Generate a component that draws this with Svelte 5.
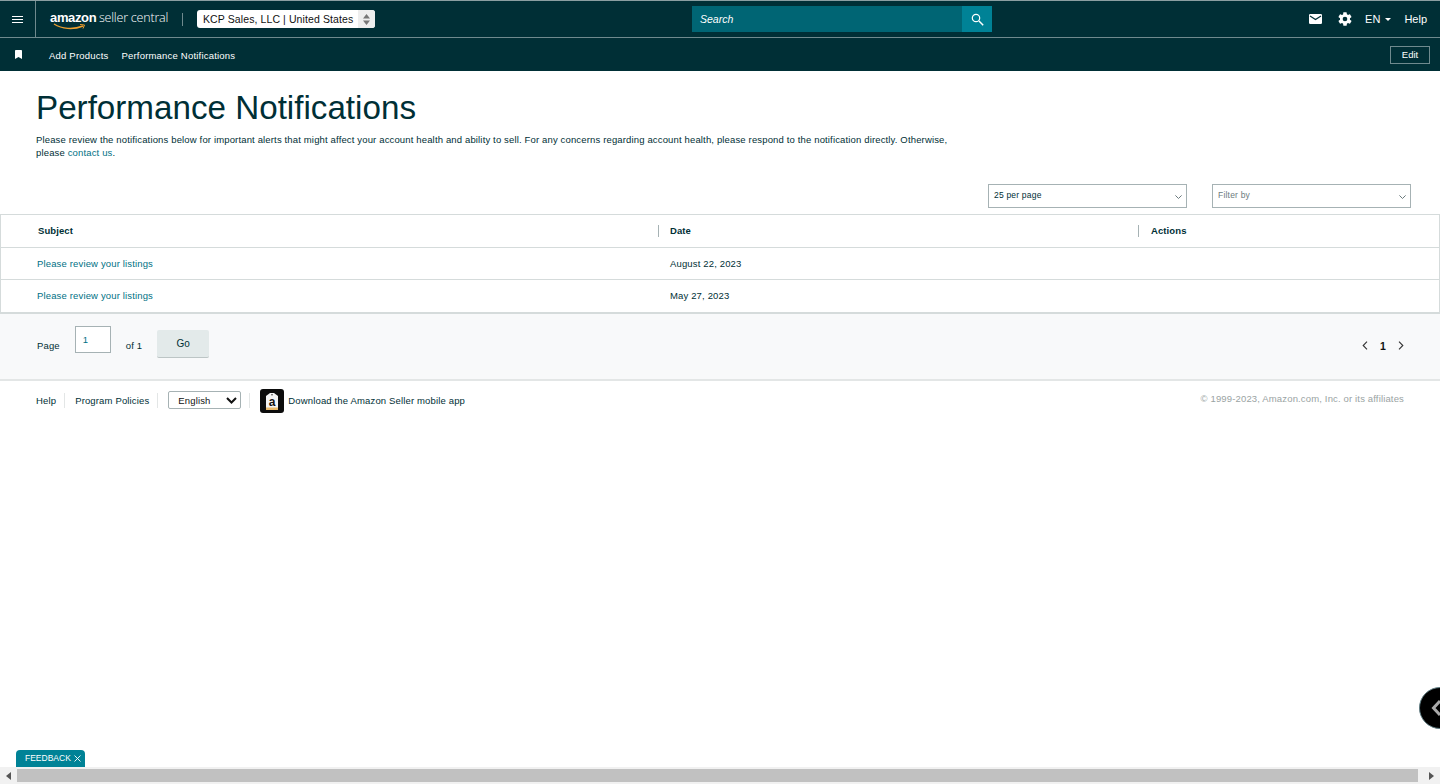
<script>
	const rows = [
		{ subject: 'Please review your listings', date: 'August 22, 2023' },
		{ subject: 'Please review your listings', date: 'May 27, 2023' }
	];
</script>

<div class="page">
	<!-- top nav -->
	<header class="nav">
		<div class="nav-top">
			<button class="burger" aria-label="Menu">
				<svg width="11" height="7" viewBox="0 0 11 7"><path d="M0 .5h11M0 3.500h11M0 6.500h11" stroke="#fff" stroke-width="1" /></svg>
			</button>
			<div class="logo">
				<span class="logo-amazon">amazon</span>
				<span class="logo-central">seller central</span>
				<svg class="smile" width="34" height="7" viewBox="0 0 34 7"><path d="M1 1c8 5 19 6 29 2" fill="none" stroke="#f0a030" stroke-width="1.4" /><path d="M27 1.500l4.500 .5-1.500 3.500" fill="none" stroke="#f0a030" stroke-width="1" /></svg>
			</div>
			<span class="logo-sep"></span>
			<div class="account">
				<span>KCP Sales, LLC | United States</span>
				<span class="spinner">
					<svg width="9" height="13" viewBox="0 0 9 13"><path d="M4.500 1l3.500 4.500h-7zM4.500 12l3.500-4.500h-7z" fill="#777" /></svg>
				</span>
			</div>
			<div class="search">
				<span class="search-text">Search</span>
				<span class="search-btn">
					<svg width="13" height="13" viewBox="0 0 13 13"><circle cx="5" cy="5" r="3.700" fill="none" stroke="#fff" stroke-width="1.200" /><path d="M8 8l4.200 4.200" stroke="#fff" stroke-width="1.500" /></svg>
				</span>
			</div>
			<div class="nav-right">
				<svg width="13" height="10" viewBox="0 0 13 10"><rect width="13" height="10" rx="1.200" fill="#fff" /><path d="M1 2l5.500 3.500L12 2" fill="none" stroke="#002f36" stroke-width="1.200" /></svg>
				<svg class="gear" width="16" height="16" viewBox="0 0 24 24"><path fill="#fff" d="M19.400 13c.04-.33.06-.66.06-1s-.02-.67-.06-1l2.100-1.650c.19-.15.24-.42.12-.64l-2-3.460c-.12-.22-.39-.3-.61-.22l-2.490 1c-.52-.4-1.080-.73-1.690-.98l-.38-2.650A.49.49 0 0 0 14 2h-4c-.25 0-.46.18-.49.42l-.38 2.650c-.61.25-1.170.59-1.690.98l-2.490-1c-.23-.09-.49 0-.61.22l-2 3.460c-.13.22-.07.49.12.64L4.570 11c-.04.33-.07.67-.07 1s.03.67.07 1l-2.110 1.650c-.19.15-.24.42-.12.64l2 3.460c.12.22.39.3.61.22l2.490-1c.52.4 1.080.73 1.690.98l.38 2.650c.03.24.24.42.49.42h4c.25 0 .46-.18.49-.42l.38-2.650c.61-.25 1.170-.59 1.690-.98l2.490 1c.23.09.49 0 .61-.22l2-3.460c.12-.22.07-.49-.12-.64L19.400 13zM12 15.500a3.500 3.500 0 1 1 0-7 3.500 3.500 0 0 1 0 7z" /></svg>
				<span class="lang">EN<i class="caret"></i></span>
				<span class="help">Help</span>
			</div>
		</div>
		<div class="nav-bottom">
			<svg class="bookmark" width="7" height="9" viewBox="0 0 7 9"><path d="M0 .8C0 .3.3 0 .8 0h5.400c.5 0 .8.3.8.8V9L3.500 7 0 9z" fill="#fff" /></svg>
			<a class="shortcut" href="#/">Add Products</a>
			<a class="shortcut" href="#/">Performance Notifications</a>
			<button class="edit">Edit</button>
		</div>
	</header>

	<main>
		<section class="intro">
			<h1>Performance Notifications</h1>
			<p>Please review the notifications below for important alerts that might affect your account health and ability to sell. For any concerns regarding account health, please respond to the notification directly. Otherwise, <span class="nowrap">please <a href="#/">contact us</a>.</span></p>
		</section>

		<div class="filters">
			<div class="select per-page">25 per page<svg width="7" height="4" viewBox="0 0 7 4"><path d="M.4.4l3.100 3.100L6.600.4" fill="none" stroke="#6b7a7d" /></svg></div>
			<div class="select filter-by">Filter by<svg width="7" height="4" viewBox="0 0 7 4"><path d="M.4.4l3.100 3.100L6.600.4" fill="none" stroke="#6b7a7d" /></svg></div>
		</div>

		<div class="table">
			<div class="row head">
				<div class="cell">Subject</div>
				<div class="cell">Date</div>
				<div class="cell">Actions</div>
			</div>
			{#each rows as row}
				<div class="row">
					<div class="cell"><a href="#/">{row.subject}</a></div>
					<div class="cell">{row.date}</div>
					<div class="cell"></div>
				</div>
			{/each}
		</div>

		<div class="pager">
			<span>Page</span>
			<span class="page-input">1</span>
			<span>of 1</span>
			<button class="go">Go</button>
			<div class="pager-right">
				<svg width="6" height="9" viewBox="0 0 6 9"><path d="M5 .7L1.200 4.500 5 8.300" fill="none" stroke="#333" stroke-width="1.100" /></svg>
				<b>1</b>
				<svg width="6" height="9" viewBox="0 0 6 9"><path d="M1 .7l3.800 3.800L1 8.300" fill="none" stroke="#333" stroke-width="1.100" /></svg>
			</div>
		</div>

		<footer>
			<a href="#/">Help</a>
			<i class="sep"></i>
			<a href="#/">Program Policies</a>
			<i class="sep"></i>
			<span class="lang-select">English
				<svg width="11" height="7" viewBox="0 0 11 7"><path d="M1 1l4.500 4.500L10 1" fill="none" stroke="#111" stroke-width="2" /></svg>
			</span>
			<i class="sep"></i>
			<span class="app-icon">
				<svg width="16" height="19" viewBox="0 0 16 19"><path d="M2 4l4-3h4l4 3v14H2z" fill="#f4f4f4" /><circle cx="8" cy="2.800" r=".7" fill="#111" /><path d="M2 15.500h12V18H2z" fill="#e8b96a" /></svg>
				<b>a</b>
			</span>
			<a href="#/">Download the Amazon Seller mobile app</a>
			<span class="copy">© 1999-2023, Amazon.com, Inc. or its affiliates</span>
		</footer>
	</main>

	<!-- floating bits -->
	<div class="feedback">FEEDBACK
		<svg width="7" height="7" viewBox="0 0 7 7"><path d="M.5.5l6 6M6.500.5l-6 6" stroke="#fff" stroke-width=".9" /></svg>
	</div>
	<div class="chat">
		<svg width="12" height="18" viewBox="0 0 12 18"><path d="M9 2L2.500 9 9 16" fill="none" stroke="#aaa" stroke-width="3" /></svg>
	</div>
	<div class="scrollbar">
		<svg width="5" height="8" viewBox="0 0 5 8"><path d="M5 0v8L0 4z" fill="#555" /></svg>
		<span class="thumb"></span>
		<svg width="5" height="8" viewBox="0 0 5 8"><path d="M0 0v8l5-4z" fill="#555" /></svg>
	</div>
</div>

<style>
	:global(body) {
		margin: 0;
		background: #fff;
		overflow: hidden;
	}

	.page {
		height: 784px;
		font-family: 'Liberation Sans', Arial, sans-serif;
		font-size: 10px;
		color: #002f36;
		overflow: hidden;
	}

	a {
		color: inherit;
		text-decoration: none;
	}

	button {
		font-family: inherit;
		cursor: pointer;
	}

	/* nav */
	.nav {
		background: #002f36;
		color: #fff;
		border-top: 1px solid #8b9fa2;
	}

	.nav-top {
		height: 36px;
		display: flex;
		align-items: center;
		border-bottom: 1px solid #6f8a8e;
		position: relative;
	}

	.burger {
		width: 36px;
		height: 36px;
		background: none;
		border: 0;
		border-right: 1px solid #6f8a8e;
		padding: 0;
		display: flex;
		align-items: center;
		justify-content: center;
	}

	.logo {
		margin-left: 14px;
		width: 120px;
		position: relative;
		white-space: nowrap;
		font-size: 13px;
		line-height: 16px;
		margin-top: -3px;
	}

	.logo-amazon {
		font-weight: 700;
		font-size: 13px;
		letter-spacing: -0.35px;
	}

	.logo-central {
		font-family: 'Open Sans', sans-serif;
		font-weight: 300;
		font-size: 12.500px;
		letter-spacing: -0.2px;
		margin-left: -1px;
	}

	.smile {
		position: absolute;
		left: 3px;
		top: 13px;
	}

	.logo-sep {
		width: 1px;
		height: 13px;
		background: #6f8a8e;
		margin-left: 12px;
	}

	.account {
		margin-left: 14px;
		width: 178px;
		height: 18px;
		background: #fff;
		border-radius: 3px;
		color: #111;
		font-size: 10.500px;
		letter-spacing: 0.1px;
		display: flex;
		align-items: center;
		justify-content: space-between;
		padding-left: 6px;
		box-sizing: border-box;
		white-space: nowrap;
	}

	.spinner {
		width: 17px;
		height: 18px;
		background: #eee;
		border-radius: 0 3px 3px 0;
		display: flex;
		align-items: center;
		justify-content: center;
	}

	.search {
		position: absolute;
		left: 692px;
		top: 5px;
		width: 300px;
		height: 26px;
		background: #006574;
		display: flex;
		justify-content: space-between;
		align-items: center;
	}

	.search-text {
		font-style: italic;
		font-size: 10.500px;
		margin-left: 8px;
	}

	.search-btn {
		width: 30px;
		height: 26px;
		background: #008296;
		display: flex;
		align-items: center;
		justify-content: center;
	}

	.nav-right {
		margin-left: auto;
		display: flex;
		align-items: center;
		margin-right: 13px;
		font-size: 11px;
	}

	.gear {
		margin-left: 15px;
	}

	.lang {
		margin-left: 12px;
		display: flex;
		align-items: center;
	}

	.caret {
		width: 0;
		height: 0;
		margin-left: 5px;
		border: 3px solid transparent;
		border-top: 3px solid #fff;
		border-bottom: 0;
	}

	.help {
		margin-left: 13px;
	}

	.nav-bottom {
		height: 33px;
		display: flex;
		align-items: center;
		padding: 0 10px 0 15px;
	}

	.shortcut {
		font-size: 9.500px;
		letter-spacing: 0.2px;
		margin-top: 2px;
		margin-right: 13px;
	}

	.bookmark + .shortcut {
		margin-left: 27px;
	}

	.edit {
		margin-left: auto;
		width: 40px;
		height: 18px;
		background: transparent;
		border: 1px solid #6f8a8e;
		color: #fff;
		font-size: 9.500px;
		padding: 0;
	}

	/* content */
	.intro {
		padding: 17px 36px 0;
	}

	h1 {
		margin: 0;
		font-size: 33.200px;
		font-weight: 400;
		line-height: 40px;
	}

	p {
		margin: 5px 0 0;
		width: 920px;
		font-size: 9.500px;
		line-height: 13px;
		letter-spacing: 0.15px;
	}

	.nowrap {
		white-space: nowrap;
	}

	p a,
	.row a {
		color: #007185;
	}

	.filters {
		display: flex;
		justify-content: flex-end;
		gap: 25px;
		padding: 25px 29px 0 0;
	}

	.select {
		height: 24px;
		box-sizing: border-box;
		border: 1px solid #a6b2b4;
		display: flex;
		align-items: center;
		justify-content: space-between;
		padding: 0 4px 2px 5px;
		font-size: 8.500px;
		letter-spacing: 0.2px;
		width: 199px;
	}

	.select svg {
		margin-top: 3px;
	}

	.filter-by {
		color: #6b7a7d;
	}

	.table {
		margin-top: 6px;
		border: 1px solid #d5dbdb;
		border-bottom: 2px solid #d5dbdb;
		font-size: 9.500px;
		letter-spacing: 0.15px;
	}

	.row {
		display: grid;
		grid-template-columns: 658px 480px 1fr;
		height: 32px;
		box-sizing: border-box;
		align-items: center;
		border-top: 1px solid #d5dbdb;
	}

	.row:last-child {
		height: 33px;
		padding-bottom: 1px;
	}

	.row.head {
		grid-template-columns: 657px 480px 1fr;
		border-top: 0;
		font-weight: 700;
		letter-spacing: 0.1px;
	}

	.cell {
		padding-left: 11px;
	}

	.cell:first-child {
		padding-left: 36px;
	}

	.head .cell {
		line-height: 12px;
	}

	.head .cell:first-child {
		padding-left: 37px;
	}

	.head .cell + .cell {
		border-left: 1px solid #a6b2b4;
	}

	.head .cell:last-child {
		padding-left: 12px;
	}

	.pager {
		height: 67px;
		box-sizing: border-box;
		background: #f8f9fa;
		border-bottom: 2px solid #e3e6e6;
		display: flex;
		align-items: center;
		padding: 0 36px 2px 37px;
		font-size: 9.500px;
		letter-spacing: 0.15px;
	}

	.page-input {
		width: 36px;
		height: 27px;
		box-sizing: border-box;
		align-self: flex-start;
		margin: 12px 15px 0 15px;
		border: 1px solid #a6b2b4;
		background: #fff;
		padding: 7px 7px;
		color: #007185;
	}

	.go {
		align-self: flex-start;
		margin: 16px 0 0 15px;
		width: 52px;
		height: 28px;
		background: #e3eaea;
		border: 0;
		border-bottom: 1px solid #bcc5c5;
		border-radius: 2px;
		color: #002f36;
		font-size: 10px;
	}

	.pager-right {
		margin-left: auto;
		display: flex;
		align-items: center;
		gap: 12px;
		font-size: 10.500px;
		color: #0f1111;
	}

	footer {
		display: flex;
		align-items: center;
		height: 38px;
		padding: 0 36px;
		font-size: 9.500px;
		letter-spacing: 0.15px;
	}

	.sep {
		width: 1px;
		height: 15px;
		background: #e3e6e6;
		margin: 0 8px;
	}

	.sep + a {
		margin-left: 2px;
	}

	.lang-select {
		margin-left: 2px;
		width: 73px;
		height: 18px;
		box-sizing: border-box;
		border: 1px solid #a6b2b4;
		border-radius: 2px;
		display: flex;
		align-items: center;
		justify-content: space-between;
		padding: 0 3px 0 9px;
		color: #111;
	}

	.app-icon {
		position: relative;
		width: 24px;
		height: 24px;
		margin: 2px 4px 0 2px;
		background: #0c0c0c;
		border-radius: 3px;
		display: flex;
		align-items: center;
		justify-content: center;
	}

	.app-icon b {
		position: absolute;
		top: 7px;
		left: 8.500px;
		font-size: 12px;
		line-height: 12px;
		color: #111;
	}

	.copy {
		margin-left: auto;
		color: #9aa3a3;
		margin-top: -4px;
	}

	/* overlays */
	.feedback {
		position: fixed;
		left: 16px;
		top: 750px;
		width: 69px;
		height: 18px;
		box-sizing: border-box;
		background: #008296;
		border-radius: 4px 4px 0 0;
		color: #fff;
		font-size: 8.500px;
		display: flex;
		align-items: center;
		gap: 3px;
		padding: 0 0 2px 9px;
	}

	.chat {
		position: fixed;
		left: 1419px;
		top: 687px;
		width: 42px;
		height: 42px;
		box-sizing: border-box;
		background: #000;
		border: 1px solid #5d7a80;
		border-radius: 50%;
		display: flex;
		align-items: center;
		padding-left: 11px;
	}

	.scrollbar {
		position: fixed;
		left: 0;
		right: 0;
		top: 767px;
		height: 17px;
		background: #f1f1f1;
		display: flex;
		align-items: center;
		justify-content: space-between;
		padding: 0 6px;
		box-sizing: border-box;
	}

	.thumb {
		position: absolute;
		left: 17px;
		right: 22px;
		top: 2px;
		bottom: 2px;
		background: #c1c1c1;
	}
</style>
